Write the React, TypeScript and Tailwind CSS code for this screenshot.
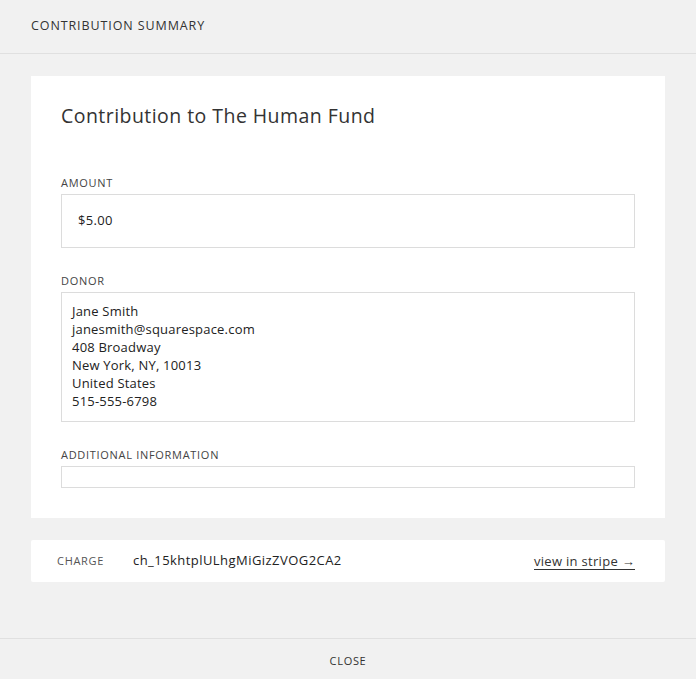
const donorLines = [
  'Jane Smith',
  'janesmith@squarespace.com',
  '408 Broadway',
  'New York, NY, 10013',
  'United States',
  '515-555-6798',
];

function FieldLabel({ children }: { children: React.ReactNode }) {
  return <div className="text-[11px] uppercase leading-none tracking-[0.7px] text-[#444]">{children}</div>;
}

export default function App() {
  return (
    <div className="flex h-[679px] w-[696px] flex-col bg-[#f1f1f1] font-['Open_Sans','Liberation_Sans',sans-serif] text-[#222]">
      <header className="flex h-[54px] shrink-0 items-center border-b border-[#e0e0e0] px-[31px]">
        <h1 className="text-[12.5px] uppercase tracking-[0.9px] text-[#333]">Contribution Summary</h1>
      </header>

      <main className="flex flex-1 flex-col gap-[22px] px-[31px] pt-[22px]">
        <section className="bg-white px-[30px] pb-[30px] pt-[30px]">
          <h2 className="text-[19.5px] leading-[20px] tracking-[0.45px] text-[#333]">Contribution to The Human Fund</h2>

          <div className="mt-[51px]">
            <FieldLabel>Amount</FieldLabel>
            <div className="mt-[6px] flex h-[54px] items-center border border-[#dcdcdc] px-[16px] text-[13px] tracking-[0.3px]">
              $5.00
            </div>
          </div>

          <div className="mt-[27px]">
            <FieldLabel>Donor</FieldLabel>
            <div className="mt-[6px] h-[130px] border border-[#dcdcdc] px-[10px] pt-[9px] text-[13px] leading-[18px] tracking-[0.2px]">
              {donorLines.map((line) => (
                <div key={line}>{line}</div>
              ))}
            </div>
          </div>

          <div className="mt-[27px]">
            <FieldLabel>Additional Information</FieldLabel>
            <div className="mt-[6px] h-[22px] border border-[#dcdcdc]" />
          </div>
        </section>

        <section className="flex h-[42px] items-center rounded-[2px] bg-white pl-[26px] pr-[30px]">
          <span className="w-[76px] text-[11px] uppercase tracking-[0.7px] text-[#555]">Charge</span>
          <span className="text-[13px] tracking-[0.45px]">ch_15khtplULhgMiGizZVOG2CA2</span>
          <a className="ml-auto border-b border-[#333] text-[13px] leading-[16px] tracking-[0.3px] text-[#333]" href="#">
            view in stripe →
          </a>
        </section>
      </main>

      <footer className="flex h-[41px] shrink-0 items-center justify-center border-t border-[#e0e0e0] pt-[4px]">
        <span className="text-[11px] uppercase tracking-[0.7px] text-[#333]">Close</span>
      </footer>
    </div>
  );
}
